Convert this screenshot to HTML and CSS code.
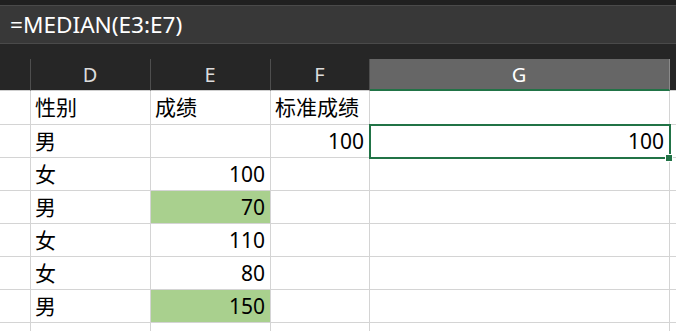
FILE: index.html
```html
<!DOCTYPE html>
<html>
<head>
    <meta name="viewport" content="width=device-width, initial-scale=1">
    <link rel="stylesheet" href="styles.css">
</head>
<body>

<div class="topbar"></div>
<div class="formula">=MEDIAN(E3:E7)</div>

<div class="sheet">
    <div class="row head">
        <div class="cell c0"></div>
        <div class="cell cd">D</div>
        <div class="cell ce">E</div>
        <div class="cell cf">F</div>
        <div class="cell cg active">G</div>
        <div class="cell ch"></div>
    </div>

    <div class="grid">
        <div class="row first">
            <div class="cell c0"></div>
            <div class="cell cd">性别</div>
            <div class="cell ce">成绩</div>
            <div class="cell cf">标准成绩</div>
            <div class="cell cg"></div>
            <div class="cell ch"></div>
        </div>
        <div class="row">
            <div class="cell c0"></div>
            <div class="cell cd">男</div>
            <div class="cell ce num"></div>
            <div class="cell cf num">100</div>
            <div class="cell cg num selected">100<span class="handle"></span></div>
            <div class="cell ch"></div>
        </div>
        <div class="row">
            <div class="cell c0"></div>
            <div class="cell cd">女</div>
            <div class="cell ce num">100</div>
            <div class="cell cf"></div>
            <div class="cell cg"></div>
            <div class="cell ch"></div>
        </div>
        <div class="row">
            <div class="cell c0"></div>
            <div class="cell cd">男</div>
            <div class="cell ce num green">70</div>
            <div class="cell cf"></div>
            <div class="cell cg"></div>
            <div class="cell ch"></div>
        </div>
        <div class="row">
            <div class="cell c0"></div>
            <div class="cell cd">女</div>
            <div class="cell ce num">110</div>
            <div class="cell cf"></div>
            <div class="cell cg"></div>
            <div class="cell ch"></div>
        </div>
        <div class="row">
            <div class="cell c0"></div>
            <div class="cell cd">女</div>
            <div class="cell ce num">80</div>
            <div class="cell cf"></div>
            <div class="cell cg"></div>
            <div class="cell ch"></div>
        </div>
        <div class="row">
            <div class="cell c0"></div>
            <div class="cell cd">男</div>
            <div class="cell ce num green">150</div>
            <div class="cell cf"></div>
            <div class="cell cg"></div>
            <div class="cell ch"></div>
        </div>
        <div class="row">
            <div class="cell c0"></div>
            <div class="cell cd"></div>
            <div class="cell ce"></div>
            <div class="cell cf"></div>
            <div class="cell cg"></div>
            <div class="cell ch"></div>
        </div>
    </div>
</div>

</body>
</html>
```

FILE: styles.css
```css
body {
    margin: 0;
    font-family: "Noto Sans", "Noto Sans CJK SC", sans-serif;
    background-color: #ffffff;
    overflow: hidden;
}

.topbar {
    height: 5px;
    background-color: #202020;
}

.formula {
    height: 37px;
    line-height: 37px;
    border-top: 1px solid #4a4a4a;
    border-bottom: 1px solid #4a4a4a;
    background-color: #383838;
    color: #ffffff;
    font-size: 22.6px;
    padding-left: 10px;
}

.sheet {
    background-color: #262626;
    padding-top: 15px;
}

.row {
    display: flex;
}

.cell {
    box-sizing: border-box;
    flex-shrink: 0;
    height: 33px;
    border-right: 1px solid #d4d4d4;
    border-bottom: 1px solid #d4d4d4;
    font-size: 21px;
    line-height: 32px;
    padding: 0 5px 0 4px;
    white-space: nowrap;
    color: #000000;
}

.c0 { width: 31px; }
.cd { width: 120px; }
.ce { width: 120px; }
.cf { width: 99px; }
.cg { width: 300px; }
.ch { flex: 1; }

.head .cell {
    height: 32px;
    line-height: 31px;
    text-align: center;
    font-size: 20px;
    color: #dcdcdc;
    border-right: 1px solid #4e4e4e;
    border-bottom: 1px solid #cfcfcf;
}

.head .active {
    background-color: #666666;
    color: #ffffff;
    border-right-color: #8a8a8a;
    border-bottom: 2px solid #217346;
}

.grid {
    background-color: #ffffff;
}

.first .cell {
    height: 34px;
    line-height: 33px;
}

.num {
    text-align: right;
}

.green {
    background-color: #a9d08e;
}

.selected {
    position: relative;
}

.selected::after {
    content: "";
    position: absolute;
    left: -1px;
    top: -1px;
    right: -2px;
    bottom: -2px;
    border: 2px solid #217346;
}

.handle {
    position: absolute;
    right: -4px;
    bottom: -5px;
    width: 6px;
    height: 6px;
    background-color: #217346;
    border: 1px solid #ffffff;
    z-index: 1;
}
```
